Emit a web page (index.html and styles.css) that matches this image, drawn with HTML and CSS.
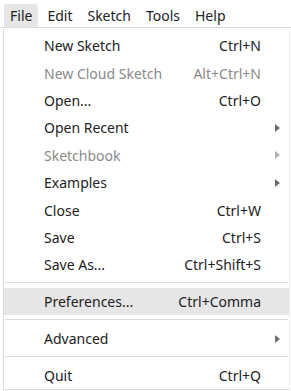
FILE: index.html
```html
<!DOCTYPE html>
<html lang="en">
<head>
    <meta charset="UTF-8">
    <title>File menu</title>
    <link rel="stylesheet" href="styles.css">
</head>
<body>
    <div class="menubar">
        <span class="menubar-item active">File</span>
        <span class="menubar-item">Edit</span>
        <span class="menubar-item">Sketch</span>
        <span class="menubar-item">Tools</span>
        <span class="menubar-item">Help</span>
    </div>

    <div class="dropdown">
        <div class="menu-item"><span class="label">New Sketch</span><span class="shortcut">Ctrl+N</span><span class="arrow"></span></div>
        <div class="menu-item disabled"><span class="label">New Cloud Sketch</span><span class="shortcut">Alt+Ctrl+N</span><span class="arrow"></span></div>
        <div class="menu-item"><span class="label">Open...</span><span class="shortcut">Ctrl+O</span><span class="arrow"></span></div>
        <div class="menu-item"><span class="label">Open Recent</span><span class="shortcut"></span><span class="arrow"><i class="tri"></i></span></div>
        <div class="menu-item disabled"><span class="label">Sketchbook</span><span class="shortcut"></span><span class="arrow"><i class="tri"></i></span></div>
        <div class="menu-item"><span class="label">Examples</span><span class="shortcut"></span><span class="arrow"><i class="tri"></i></span></div>
        <div class="menu-item"><span class="label">Close</span><span class="shortcut">Ctrl+W</span><span class="arrow"></span></div>
        <div class="menu-item"><span class="label">Save</span><span class="shortcut">Ctrl+S</span><span class="arrow"></span></div>
        <div class="menu-item"><span class="label">Save As...</span><span class="shortcut">Ctrl+Shift+S</span><span class="arrow"></span></div>
        <div class="separator"></div>
        <div class="menu-item hover"><span class="label">Preferences...</span><span class="shortcut">Ctrl+Comma</span><span class="arrow"></span></div>
        <div class="separator"></div>
        <div class="menu-item"><span class="label">Advanced</span><span class="shortcut"></span><span class="arrow"><i class="tri"></i></span></div>
        <div class="separator"></div>
        <div class="menu-item"><span class="label">Quit</span><span class="shortcut">Ctrl+Q</span><span class="arrow"></span></div>
    </div>
</body>
</html>
```

FILE: styles.css
```css
:root {
    --bg-color: #ffffff;
    --text-color: #222222;
    --disabled-color: #8a8a8a;
    --border-color: #dcdcdc;
    --hover-bg: #e6e6e6;
    --arrow-color: #6e6e6e;
    --arrow-disabled: #b4b4b4;
}

body {
    margin: 0;
    width: 291px;
    height: 391px;
    overflow: hidden;
    font-family: "Noto Sans", "Open Sans", sans-serif;
    font-size: 14px;
    background-color: var(--bg-color);
    color: var(--text-color);
}

.menubar {
    display: flex;
    align-items: flex-end;
    height: 27px;
    padding-left: 4px;
    gap: 3px;
    border-bottom: 1px solid var(--border-color);
}

.menubar-item {
    height: 23px;
    line-height: 23px;
    padding: 0 6px;
    border-radius: 3px 3px 0 0;
}

.menubar-item.active {
    background-color: var(--hover-bg);
}

.dropdown {
    margin-left: 3px;
    width: 285px;
    padding-top: 4px;
    border-left: 1px solid var(--border-color);
    border-right: 1px solid #f0f0f0;
    border-bottom: 1px solid var(--border-color);
}

.menu-item {
    display: grid;
    grid-template-columns: 1fr auto 28px;
    align-items: center;
    height: 27.4px;
    padding-left: 40px;
}

.menu-item.disabled {
    color: var(--disabled-color);
}

.menu-item.hover {
    background-color: var(--hover-bg);
}

.shortcut {
    text-align: right;
}

.arrow {
    display: flex;
    justify-content: flex-end;
    padding-right: 9px;
}

.tri {
    width: 0;
    height: 0;
    border-top: 4.5px solid transparent;
    border-bottom: 4.5px solid transparent;
    border-left: 5px solid var(--arrow-color);
}

.disabled .tri {
    border-left-color: var(--arrow-disabled);
}

.separator {
    height: 1px;
    margin: 3.5px 1px 5px;
    background-color: var(--border-color);
}
```
